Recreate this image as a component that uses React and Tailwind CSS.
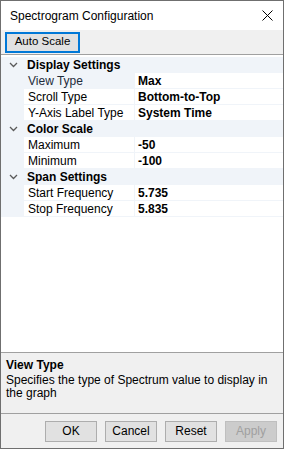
import React from "react";

const sections = [
  {
    name: "Display Settings",
    items: [
      ["View Type", "Max"],
      ["Scroll Type", "Bottom-to-Top"],
      ["Y-Axis Label Type", "System Time"],
    ],
  },
  {
    name: "Color Scale",
    items: [
      ["Maximum", "-50"],
      ["Minimum", "-100"],
    ],
  },
  {
    name: "Span Settings",
    items: [
      ["Start Frequency", "5.735"],
      ["Stop Frequency", "5.835"],
    ],
  },
];

function Chevron() {
  return (
    <svg width="9" height="6" viewBox="0 0 9 6" className="block">
      <path d="M1 1 L4.5 4.5 L8 1" fill="none" stroke="#5a5a5a" strokeWidth="1.3" />
    </svg>
  );
}

function Btn({ children, disabled }) {
  return (
    <div
      className={`w-[52px] h-[21px] flex items-center justify-center border text-[12px] ${
        disabled ? "bg-[#cccccc] border-[#bfbfbf] text-[#a0a0a0]" : "bg-[#e1e1e1] border-[#adadad] text-black"
      }`}
    >
      {children}
    </div>
  );
}

export default function App() {
  return (
    <div className="w-[288px] h-[452px] bg-white" style={{ fontFamily: '"Liberation Sans", Arial, sans-serif' }}>
      <div className="w-[284px] h-[449px] border border-[#6f6f6f] flex flex-col bg-white">
        {/* title bar */}
        <div className="h-[29px] flex items-center justify-between pl-[9px] pr-[10px] shrink-0">
          <span className="text-[12px] text-black">Spectrogram Configuration</span>
          <svg width="11" height="11" viewBox="0 0 11 11">
            <path d="M0.5 0.5 L10.5 10.5 M10.5 0.5 L0.5 10.5" stroke="#000" strokeWidth="1" />
          </svg>
        </div>

        {/* toolbar */}
        <div className="h-[25px] bg-[#f0f0f0] flex items-center pl-[4px] border-b border-[#a0a0a0] shrink-0">
          <div className="w-[75px] h-[21px] border-2 border-[#0078d7] bg-[#e1e1e1] flex items-center justify-center text-[11.5px] text-black">
            Auto Scale
          </div>
        </div>

        {/* property grid */}
        <div className="flex-1 bg-white pt-[2px]">
          {sections.map((s) => (
            <div key={s.name}>
              <div className="h-[16px] bg-[#f0f4f9] flex items-center">
                <div className="w-[26px] flex justify-center pr-[2px]">
                  <Chevron />
                </div>
                <span className="text-[12px] font-bold text-black leading-none">{s.name}</span>
              </div>
              {s.items.map(([label, value]) => {
                const selected = label === "View Type";
                return (
                  <div key={label} className="h-[16px] flex bg-[#f0f4f9]">
                    <div className="w-[23px]" />
                    <div
                      className={`w-[110px] h-[15px] flex items-center pl-[4px] text-[12px] leading-none ${
                        selected ? "bg-[#f0f4f9] text-[#1e2b3a]" : "bg-white text-black"
                      }`}
                    >
                      {label}
                    </div>
                    <div className="w-[1px]" />
                    <div className="flex-1 h-[15px] bg-white flex items-center pl-[3px] text-[12px] font-bold text-black leading-none">
                      {value}
                    </div>
                  </div>
                );
              })}
            </div>
          ))}
        </div>

        {/* help pane */}
        <div className="h-[62px] bg-[#f0f0f0] border-t border-b border-[#a0a0a0] px-[5px] pt-[5px] shrink-0">
          <div className="text-[12px] font-bold text-black leading-[15px]">View Type</div>
          <div className="text-[12px] text-black leading-[13px] pt-[1px]">
            Specifies the type of Spectrum value to display in the graph
          </div>
        </div>

        {/* buttons */}
        <div className="h-[34px] bg-[#f0f0f0] flex items-center justify-end gap-[8px] pr-[6px] shrink-0">
          <Btn>OK</Btn>
          <Btn>Cancel</Btn>
          <Btn>Reset</Btn>
          <Btn disabled>Apply</Btn>
        </div>
      </div>
    </div>
  );
}
